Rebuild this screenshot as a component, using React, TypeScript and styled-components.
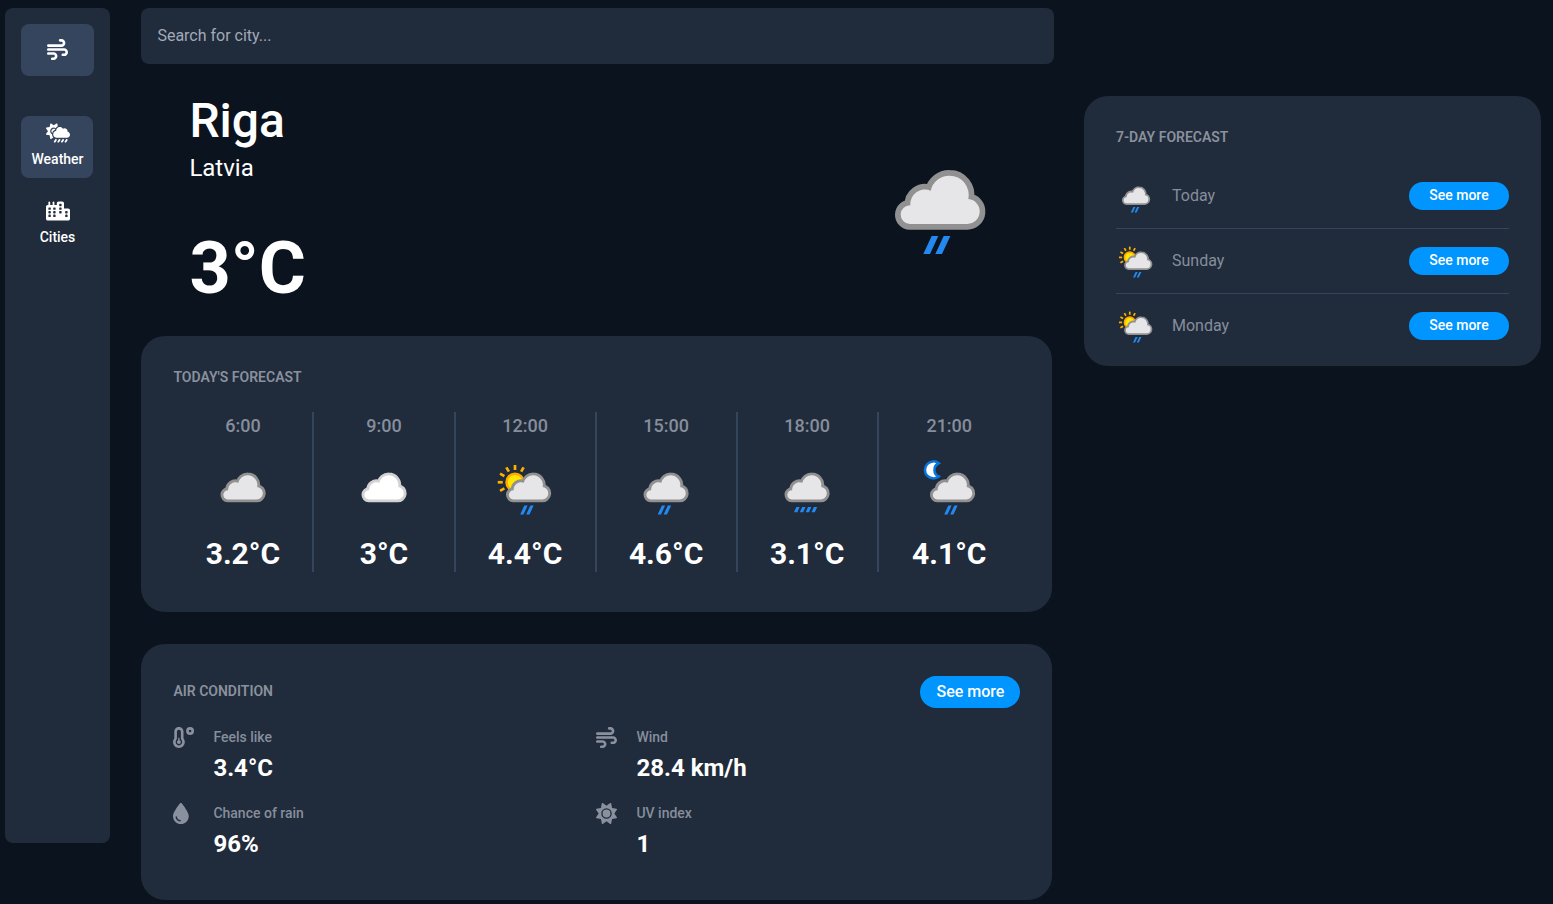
import React from "react";
import styled, { createGlobalStyle } from "styled-components";
import {
  FaCity,
  FaCloudSunRain,
  FaDroplet,
  FaSun,
  FaTemperatureLow,
  FaWind,
} from "react-icons/fa6";

const color = {
  page: "#0b131e",
  panel: "#202b3b",
  active: "#35455e",
  muted: "#8a919e",
  faint: "#868e9b",
  accent: "#0095ff",
  text: "#ffffff",
};

const GlobalStyle = createGlobalStyle`
  *, *::before, *::after { box-sizing: border-box; }
  html, body { margin: 0; height: 100%; overflow: hidden; background: ${color.page}; }
  body { font-family: Roboto, "Liberation Sans", sans-serif; color: ${color.text}; }
  h1, h2, p { margin: 0; font-weight: inherit; }
`;

const Page = styled.div`
  display: flex;
  align-items: flex-start;
  height: 904px;
  padding: 8px 12px 0 5px;
`;

const Sidebar = styled.nav`
  display: flex;
  flex-direction: column;
  flex: none;
  width: 105px;
  height: 835px;
  padding: 16px;
  border-radius: 8px;
  background: ${color.panel};
`;

const Logo = styled.div`
  display: flex;
  align-items: center;
  justify-content: center;
  height: 52px;
  margin-bottom: 40px;
  padding-bottom: 1px;
  border-radius: 8px;
  background: ${color.active};
`;

const NavItem = styled.a<{ $active?: boolean }>`
  display: flex;
  flex-direction: column;
  align-items: center;
  width: 72px;
  height: 62px;
  margin-bottom: 16px;
  padding: 7px 0 0 1px;
  border-radius: 8px;
  background: ${(p) => (p.$active ? color.active : "transparent")};
  font-size: 14px;
  font-weight: 500;
  line-height: 16px;
  svg {
    height: 20px;
    width: 24px;
    margin-bottom: 8px;
  }
`;

const Main = styled.main`
  display: flex;
  flex-direction: column;
  flex: none;
  width: 911px;
  margin-left: 31.4px;
`;

const Search = styled.input`
  width: 913px;
  height: 56px;
  padding: 0 16px 2px;
  border: 0;
  border-radius: 8px;
  outline: 0;
  background: ${color.panel};
  color: ${color.text};
  font: 400 16px/20px Roboto, sans-serif;
  &::placeholder { color: #a0aab8; opacity: 1; }
`;

const Hero = styled.section`
  display: flex;
  justify-content: space-between;
  height: 272px;
  padding: 29px 48.8px 0 48px;
`;

const City = styled.h1`
  font-size: 48px;
  font-weight: 500;
  line-height: 56px;
`;

const Country = styled.p`
  margin-top: 5px;
  font-size: 24px;
  line-height: 28px;
`;

const CurrentTemp = styled.p`
  margin-top: 45px;
  font-size: 72px;
  font-weight: 700;
  line-height: 84px;
`;

const HeroIcon = styled.div`
  height: 128px;
  margin-top: 44px;
`;

const Card = styled.section<{ $height: number }>`
  height: ${(p) => p.$height}px;
  padding: 32px;
  border-radius: 24px;
  background: ${color.panel};
  & + & { margin-top: 32px; }
`;

const CardHeader = styled.header`
  display: flex;
  align-items: center;
  justify-content: space-between;
  h2 { padding-bottom: 2px; }
`;

const CardTitle = styled.h2`
  color: ${color.muted};
  font-size: 14px;
  font-weight: 600;
  line-height: 18px;
`;

const Hours = styled.div`
  display: grid;
  grid-template-columns: repeat(6, 1fr);
  margin: 26px 0.6px 0 0;
`;

const Hour = styled.div`
  display: flex;
  flex-direction: column;
  align-items: center;
  height: 160px;
  padding-top: 3px;
  &:not(:last-child) { border-right: 2px solid ${color.active}; }
  svg { margin: 19px 0 16px; }
`;

const HourTime = styled.p`
  color: ${color.faint};
  font-size: 18px;
  font-weight: 500;
  line-height: 22px;
`;

const HourTemp = styled.p`
  font-size: 30px;
  font-weight: 700;
  line-height: 36px;
`;

const MoreButton = styled.button<{ $small?: boolean }>`
  width: 100px;
  height: ${(p) => (p.$small ? 28 : 32)}px;
  padding: 0 0 ${(p) => (p.$small ? 2 : 0)}px;
  border: 0;
  border-radius: 16px;
  background: ${color.accent};
  color: ${color.text};
  font: ${(p) => (p.$small ? "500 14px/20px" : "500 16px/20px")} Roboto, sans-serif;
`;

const Metrics = styled.div`
  display: grid;
  grid-template-columns: 423px 1fr;
  row-gap: 16px;
  margin-top: 19px;
`;

const Metric = styled.div`
  display: flex;
  height: 60px;
`;

const MetricIcon = styled.div`
  width: 40px;
  color: ${color.muted};
  svg { display: block; height: 21px; width: 21px; }
`;

const MetricLabel = styled.p`
  padding-top: 1px;
  color: ${color.faint};
  font-size: 14px;
  font-weight: 500;
  line-height: 18px;
`;

const MetricValue = styled.p`
  margin-top: 8px;
  font-size: 24px;
  font-weight: 700;
  line-height: 28px;
`;

const Aside = styled.aside`
  flex: none;
  width: 457px;
  margin: 88px 0 0 31.6px;
`;

const Days = styled.div`
  display: flex;
  flex-direction: column;
  margin-top: 18px;
`;

const Day = styled.div`
  display: flex;
  align-items: center;
  height: 65px;
  border-bottom: 1px solid ${color.active};
  &:last-child { border-bottom-color: transparent; }
`;

const DayName = styled.p`
  flex: 1;
  margin-left: 16px;
  color: ${color.faint};
  font-size: 16px;
  line-height: 20px;
`;

type Kind = "rain" | "cloudy" | "clear" | "sun" | "drizzle" | "moon";

const cloudPath =
  "M89 207 A28 28 0 0 1 91 151 A44 44 0 0 1 152 107 A57 58 0 0 1 209 62 A57 58 0 0 1 265 132 A37 37.5 0 0 1 259 207 Z";

const Icon = styled.svg`
  display: block;
  flex: none;
`;

const WeatherIcon = ({ kind, size }: { kind: Kind; size: number }) => {
  const shift = kind === "sun" || kind === "moon" ? 7 : 0;
  const pale = kind === "clear";
  return (
    <Icon width={size} height={size} viewBox="0 0 128 128">
      {kind === "sun" && (
        <g transform="translate(44 52.5)">
          {[-120, -90, -60, -30, 0, 30].map((a) => (
            <rect key={a} x="-2.7" y="-34.5" width="5.4" height="10" fill="#ffb100" transform={`rotate(${a})`} />
          ))}
          <circle r="17" fill="#ffe600" stroke="#ffa800" strokeWidth="5" />
        </g>
      )}
      {kind === "moon" && (
        <path
          d="M43.500 14.5 A17 17 0 1 0 43.5 41 A14.5 14.5 0 0 1 43.5 14.5 Z"
          fill="#ffffff"
          stroke="#0a74dc"
          strokeWidth="5"
        />
      )}
      <g transform={`translate(${4 + shift} 18) scale(0.33333)`}>
        <path d={cloudPath} fill="none" stroke={pale ? "#d2d2d2" : "#919191"} strokeWidth="34" strokeLinejoin="round" />
        <path d={cloudPath} fill={pale ? "#ffffff" : "#e6e6e8"} />
        {kind !== "cloudy" && kind !== "clear" && kind !== "drizzle" && (
          <path d="M155 243h20l-25 54h-20zM191 243h20l-25 54h-20z" fill="#2389f0" />
        )}
        {kind === "drizzle" && (
          <path
            d="M116 252h20l-14 32h-20zM151 252h20l-14 32h-20zM186 252h20l-14 32h-20zM221 252h20l-14 32h-20z"
            fill="#2389f0"
          />
        )}
      </g>
    </Icon>
  );
};

const hours: { time: string; kind: Kind; temp: string }[] = [
  { time: "6:00", kind: "cloudy", temp: "3.2°C" },
  { time: "9:00", kind: "clear", temp: "3°C" },
  { time: "12:00", kind: "sun", temp: "4.4°C" },
  { time: "15:00", kind: "rain", temp: "4.6°C" },
  { time: "18:00", kind: "drizzle", temp: "3.1°C" },
  { time: "21:00", kind: "moon", temp: "4.1°C" },
];

const metrics = [
  { label: "Feels like", value: "3.4°C", Glyph: FaTemperatureLow },
  { label: "Wind", value: "28.4 km/h", Glyph: FaWind },
  { label: "Chance of rain", value: "96%", Glyph: FaDroplet },
  { label: "UV index", value: "1", Glyph: FaSun },
];

const days: { name: string; kind: Kind }[] = [
  { name: "Today", kind: "rain" },
  { name: "Sunday", kind: "sun" },
  { name: "Monday", kind: "sun" },
];

export default function App() {
  return (
    <Page>
      <GlobalStyle />
      <Sidebar>
        <Logo>
          <FaWind size={21} />
        </Logo>
        <NavItem $active>
          <FaCloudSunRain />
          Weather
        </NavItem>
        <NavItem>
          <FaCity />
          Cities
        </NavItem>
      </Sidebar>
      <Main>
        <Search placeholder="Search for city..." />
        <Hero>
          <div>
            <City>Riga</City>
            <Country>Latvia</Country>
            <CurrentTemp>3°C</CurrentTemp>
          </div>
          <HeroIcon>
            <WeatherIcon kind="rain" size={128} />
          </HeroIcon>
        </Hero>
        <Card $height={276}>
          <CardTitle>TODAY'S FORECAST</CardTitle>
          <Hours>
            {hours.map((h) => (
              <Hour key={h.time}>
                <HourTime>{h.time}</HourTime>
                <WeatherIcon kind={h.kind} size={64} />
                <HourTemp>{h.temp}</HourTemp>
              </Hour>
            ))}
          </Hours>
        </Card>
        <Card $height={256}>
          <CardHeader>
            <CardTitle>AIR CONDITION</CardTitle>
            <MoreButton>See more</MoreButton>
          </CardHeader>
          <Metrics>
            {metrics.map(({ label, value, Glyph }) => (
              <Metric key={label}>
                <MetricIcon>
                  <Glyph preserveAspectRatio="xMinYMid meet" />
                </MetricIcon>
                <div>
                  <MetricLabel>{label}</MetricLabel>
                  <MetricValue>{value}</MetricValue>
                </div>
              </Metric>
            ))}
          </Metrics>
        </Card>
      </Main>
      <Aside>
        <Card $height={270}>
          <CardTitle>7-DAY FORECAST</CardTitle>
          <Days>
            {days.map((d) => (
              <Day key={d.name}>
                <WeatherIcon kind={d.kind} size={40} />
                <DayName>{d.name}</DayName>
                <MoreButton $small>See more</MoreButton>
              </Day>
            ))}
          </Days>
        </Card>
      </Aside>
    </Page>
  );
}
